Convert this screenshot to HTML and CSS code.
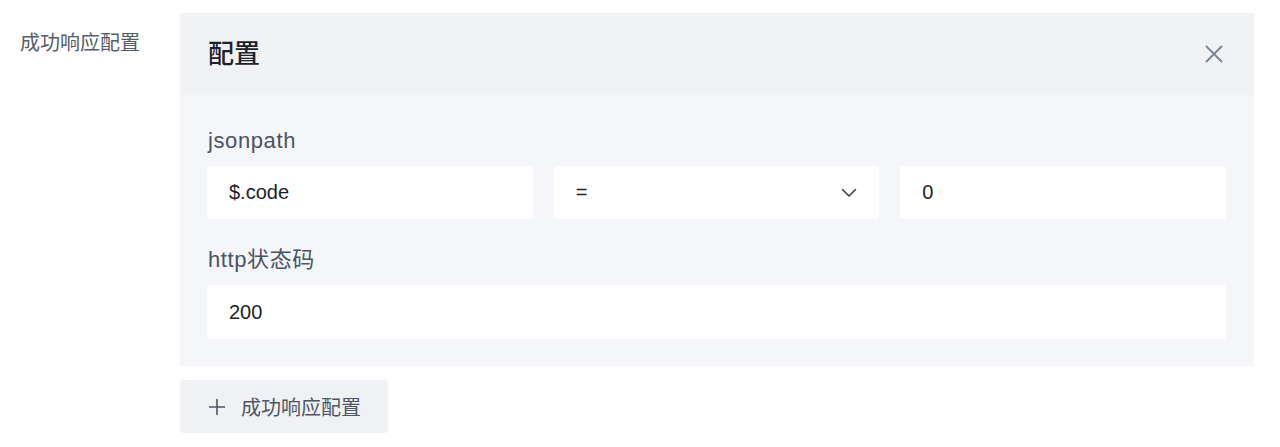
FILE: index.html
```html
<!DOCTYPE html>
<html lang="zh-CN">
<head>
<meta charset="utf-8">
<link rel="stylesheet" href="styles.css">
</head>
<body>
<div class="form-row">
  <div class="row-label">成功响应配置</div>
  <div class="row-content">
    <div class="panel">
      <div class="panel-header">
        <div class="panel-title">配置</div>
        <svg class="close-icon" width="18" height="18" viewBox="0 0 18 18"><path d="M1.5 1.5 L16.5 16.5 M16.5 1.5 L1.5 16.5" stroke="#7b8592" stroke-width="1.8" fill="none" stroke-linecap="round"/></svg>
      </div>
      <div class="panel-body">
        <div class="field-label">jsonpath</div>
        <div class="input-row">
          <div class="input">$.code</div>
          <div class="input select"><span>=</span>
            <svg class="chevron" width="16" height="10" viewBox="0 0 16 10"><path d="M1.5 1.5 L8 8 L14.5 1.5" stroke="#3a4250" stroke-width="1.6" fill="none" stroke-linecap="round" stroke-linejoin="round"/></svg>
          </div>
          <div class="input">0</div>
        </div>
        <div class="field-label second">http状态码</div>
        <div class="input full">200</div>
      </div>
    </div>
    <button class="add-btn">
      <svg width="18" height="18" viewBox="0 0 18 18"><path d="M9 1 V17 M1 9 H17" stroke="#4e5663" stroke-width="1.6" fill="none"/></svg>
      <span>成功响应配置</span>
    </button>
  </div>
</div>
</body>
</html>
```

FILE: styles.css
```css
html, body {
  margin: 0;
  padding: 0;
  background: #ffffff;
  font-family: "Liberation Sans", "Noto Sans CJK SC", sans-serif;
}

.form-row {
  display: flex;
  padding: 13px 26px 0 20px;
}

.row-label {
  width: 160px;
  flex: none;
  margin-top: 17px;
  font-size: 20px;
  line-height: 26px;
  color: #555d69;
}

.row-content {
  flex: 1;
  display: flex;
  flex-direction: column;
  align-items: flex-start;
}

.panel {
  align-self: stretch;
  background: #f5f6fa;
}

.panel-header {
  height: 82px;
  background: #f0f2f6;
  display: flex;
  align-items: center;
  justify-content: space-between;
  padding: 0 31px 0 28px;
}

.panel-title {
  font-size: 26px;
  font-weight: 500;
  color: #1d2129;
  line-height: 30px;
}

.close-icon {
  display: block;
}

.panel-body {
  padding: 31px 28px 27px 27px;
}

.field-label {
  font-size: 22px;
  line-height: 30px;
  color: #4a5363;
  padding-left: 1px;
  margin-bottom: 10px;
  letter-spacing: 0.6px;
}

.field-label.second {
  margin-top: 26px;
}

.input-row {
  display: flex;
  gap: 21px;
}

.input {
  flex: 1;
  height: 53px;
  background: #ffffff;
  border-radius: 4px;
  display: flex;
  align-items: center;
  padding: 0 22px;
  font-size: 20px;
  color: #1b1f27;
  box-sizing: border-box;
}

.input.select {
  justify-content: space-between;
}

.input.full {
  height: 54px;
}

.chevron {
  display: block;
}

.add-btn {
  margin-top: 14px;
  height: 53px;
  width: 208px;
  border: none;
  border-radius: 4px;
  background: #f0f1f4;
  display: flex;
  align-items: center;
  gap: 15px;
  padding: 0 0 0 28px;
  font-family: "Liberation Sans", "Noto Sans CJK SC", sans-serif;
  font-size: 20px;
  color: #4e5663;
}

.add-btn svg {
  display: block;
}
```
